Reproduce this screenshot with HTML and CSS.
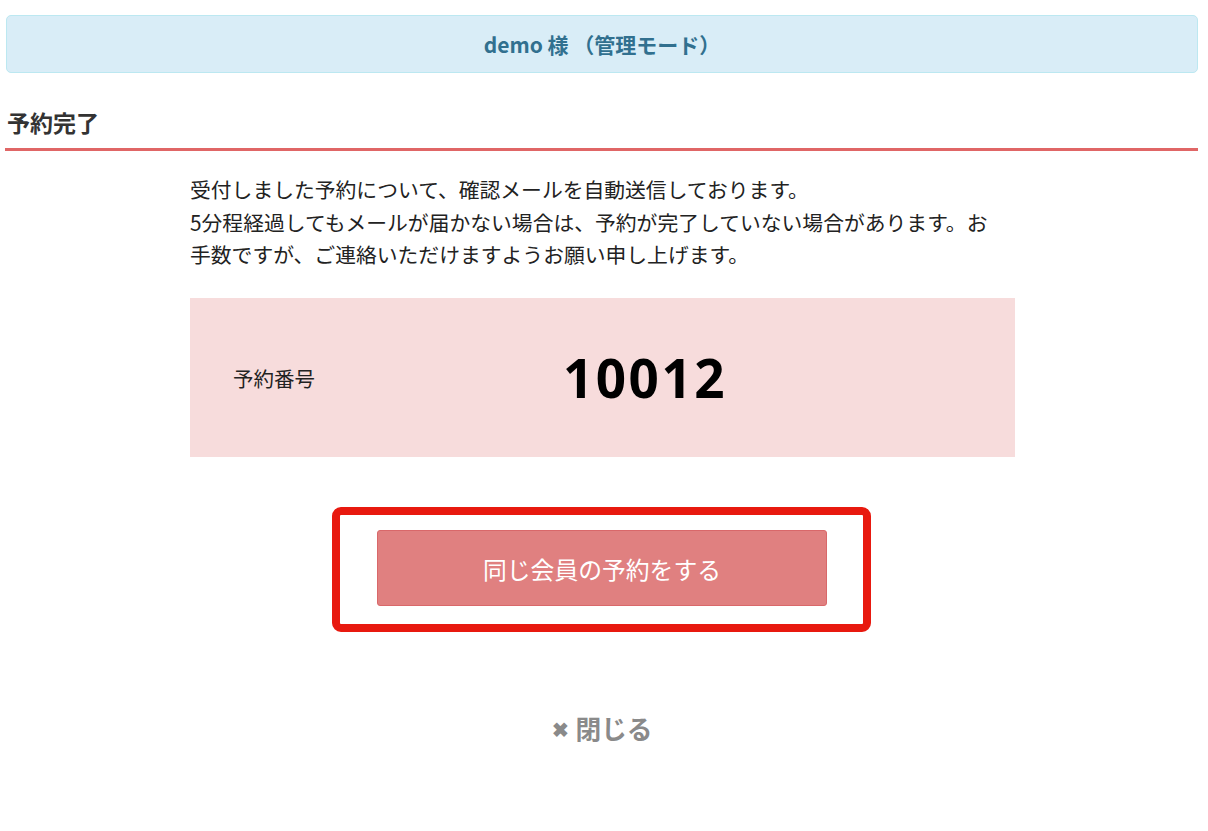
FILE: index.html
```html
<!DOCTYPE html>
<html lang="ja">
<head>
<meta charset="utf-8">
<link rel="stylesheet" href="styles.css">
</head>
<body>
<div class="page">
  <div class="alert">demo 様 （管理モード）</div>
  <h2 class="title">予約完了</h2>
  <div class="content">
    <p class="message">受付しました予約について、確認メールを自動送信しております。<br>5分程経過してもメールが届かない場合は、予約が完了していない場合があります。お手数ですが、ご連絡いただけますようお願い申し上げます。</p>
    <div class="number-box">
      <div class="number-label">予約番号</div>
      <div class="number-value">10012</div>
    </div>
    <div class="action">
      <div class="highlight">
        <button class="btn">同じ会員の予約をする</button>
      </div>
    </div>
    <div class="close"><span class="close-x">✖</span>閉じる</div>
  </div>
</div>
</body>
</html>
```
FILE: styles.css
```css
html, body {
  margin: 0;
  padding: 0;
  background: #fff;
}
body {
  font-family: "Noto Sans CJK JP", "Noto Sans", sans-serif;
  color: #333;
}
.page {
  padding: 15px 10px 0 5px;
}
.alert {
  margin-left: 1px;
  height: 56px;
  display: flex;
  align-items: center;
  justify-content: center;
  background: #d9edf7;
  border: 1px solid #bce8f1;
  border-radius: 5px;
  color: #31708f;
  font-weight: bold;
  font-size: 21px;
}
.title {
  margin: 32px 0 0 0;
  padding: 0 0 9px 2px;
  font-size: 23px;
  line-height: 34px;
  font-weight: bold;
  color: #333;
  border-bottom: 3px solid #e06666;
}
.content {
  width: 825px;
  margin: 22px 0 0 185px;
}
.message {
  margin: 0;
  padding-right: 14px;
  font-size: 20.8px;
  line-height: 32.5px;
  color: #222;
}
.number-box {
  margin-top: 27.5px;
  height: 159px;
  background: #f7dcdc;
  display: grid;
  grid-template-columns: 243px 424px;
  align-items: center;
}
.number-label {
  padding-left: 43px;
  font-size: 20.5px;
  color: #222;
}
.number-value {
  text-align: center;
  font-family: "Noto Sans", sans-serif;
  font-weight: bold;
  font-size: 53px;
  letter-spacing: 2.5px;
  color: #000;
}
.action {
  margin-top: 50px;
  display: flex;
  justify-content: center;
  padding-right: 2px;
}
.highlight {
  border: 8px solid #e8190f;
  border-radius: 9px;
  padding: 15px 36px 18px 37px;
}
.btn {
  display: block;
  box-sizing: border-box;
  width: 450px;
  height: 76px;
  background: #e08080;
  border: 1px solid #d9686a;
  border-radius: 3px;
  color: #fff;
  font-family: "Noto Sans CJK JP", sans-serif;
  font-size: 23.8px;
}
.close {
  margin-top: 77px;
  text-align: center;
  color: #8a8a8a;
  font-size: 25.7px;
  font-weight: bold;
}
.close-x {
  font-size: 20px;
  margin-right: 6px;
  vertical-align: 2px;
}
```
